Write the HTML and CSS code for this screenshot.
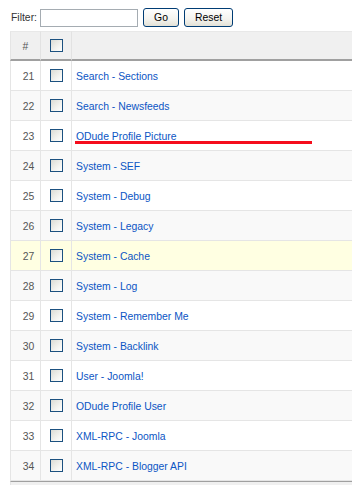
FILE: index.html
```html
<!DOCTYPE html>
<html lang="en">
<head>
    <meta charset="UTF-8">
    <title>Plugin Manager</title>
    <link rel="stylesheet" href="styles.css">
</head>
<body>

<form class="filter-bar">
    <label for="search">Filter:</label>
    <input type="text" id="search" class="filter-input">
    <button type="button" class="btn btn-go">Go</button>
    <button type="button" class="btn btn-reset">Reset</button>
</form>

<table class="adminlist">
    <thead>
        <tr>
            <th class="col-num">#</th>
            <th class="col-check"><span class="checkbox"></span></th>
            <th class="col-title"></th>
        </tr>
    </thead>
    <tbody>
        <tr class="row0"><td class="col-num">21</td><td class="col-check"><span class="checkbox"></span></td><td class="col-title"><a href="#">Search - Sections</a></td></tr>
        <tr class="row1"><td class="col-num">22</td><td class="col-check"><span class="checkbox"></span></td><td class="col-title"><a href="#">Search - Newsfeeds</a></td></tr>
        <tr class="row0"><td class="col-num">23</td><td class="col-check"><span class="checkbox"></span></td><td class="col-title marked"><a href="#">ODude Profile Picture</a><span class="red-line"></span></td></tr>
        <tr class="row1"><td class="col-num">24</td><td class="col-check"><span class="checkbox"></span></td><td class="col-title"><a href="#">System - SEF</a></td></tr>
        <tr class="row0"><td class="col-num">25</td><td class="col-check"><span class="checkbox"></span></td><td class="col-title"><a href="#">System - Debug</a></td></tr>
        <tr class="row1"><td class="col-num">26</td><td class="col-check"><span class="checkbox"></span></td><td class="col-title"><a href="#">System - Legacy</a></td></tr>
        <tr class="row0 hover"><td class="col-num">27</td><td class="col-check"><span class="checkbox"></span></td><td class="col-title"><a href="#">System - Cache</a></td></tr>
        <tr class="row1"><td class="col-num">28</td><td class="col-check"><span class="checkbox"></span></td><td class="col-title"><a href="#">System - Log</a></td></tr>
        <tr class="row0"><td class="col-num">29</td><td class="col-check"><span class="checkbox"></span></td><td class="col-title"><a href="#">System - Remember Me</a></td></tr>
        <tr class="row1"><td class="col-num">30</td><td class="col-check"><span class="checkbox"></span></td><td class="col-title"><a href="#">System - Backlink</a></td></tr>
        <tr class="row0"><td class="col-num">31</td><td class="col-check"><span class="checkbox"></span></td><td class="col-title"><a href="#">User - Joomla!</a></td></tr>
        <tr class="row1"><td class="col-num">32</td><td class="col-check"><span class="checkbox"></span></td><td class="col-title"><a href="#">ODude Profile User</a></td></tr>
        <tr class="row0"><td class="col-num">33</td><td class="col-check"><span class="checkbox"></span></td><td class="col-title"><a href="#">XML-RPC - Joomla</a></td></tr>
        <tr class="row1"><td class="col-num">34</td><td class="col-check"><span class="checkbox"></span></td><td class="col-title"><a href="#">XML-RPC - Blogger API</a></td></tr>
    </tbody>
    <tfoot>
        <tr><td colspan="3"></td></tr>
    </tfoot>
</table>

</body>
</html>
```

FILE: styles.css
```css
body {
    margin: 0;
    background: #fff;
    font-family: "Liberation Sans", Arial, Helvetica, sans-serif;
    font-size: 10.4px;
    color: #333;
}

/* filter bar */
.filter-bar {
    display: flex;
    align-items: center;
    height: 19px;
    padding: 8px 0 0 11px;
    margin: 0;
}

.filter-bar label {
    color: #333;
    margin-right: 3px;
}

.filter-input {
    box-sizing: border-box;
    width: 98px;
    height: 18px;
    margin: 0;
    padding: 0 2px;
    border: 1px solid #a5acb2;
    font: inherit;
}

.btn {
    box-sizing: border-box;
    height: 19px;
    margin: 0 0 0 5px;
    padding: 0;
    border: 1px solid #003c74;
    border-radius: 3px;
    background: linear-gradient(#ffffff, #f4f3ee 60%, #e3e1d6);
    font: inherit;
    color: #000;
}

.btn-go { width: 36px; }
.btn-reset { width: 49px; }

/* table */
.adminlist {
    width: calc(100% - 10px);
    margin: 4px 0 0 10px;
    border-collapse: separate;
    border-spacing: 0;
}

.adminlist th,
.adminlist td {
    box-sizing: border-box;
    padding: 1px 4px 0;
}

.adminlist th {
    height: 30px;
    background: #f0f0f0;
    border-top: 1px solid #e8e8e8;
    border-bottom: 2px solid #a0a0a0;
    border-right: 1px solid #e2e2e2;
    color: #666;
    font-weight: normal;
}

.adminlist td {
    height: 30px;
    border-bottom: 1px solid #e5e5e5;
    border-right: 1px solid #e5e5e5;
}

.adminlist .col-num {
    width: 31px;
    border-left: 1px solid #e5e5e5;
    text-align: center;
    padding-left: 6px;
    padding-right: 0;
    color: #555;
}

.adminlist th.col-num {
    padding-left: 0;
}

.adminlist .col-check {
    width: 31px;
    padding: 0;
    text-align: center;
}

.adminlist .col-title {
    border-right: none;
}

.row0 td { background: #fff; }
.row1 td { background: #f9f9f9; }
.row0.hover td { background: #ffffe2; }

.adminlist a {
    color: #0b55c4;
    text-decoration: none;
}

.checkbox {
    display: inline-block;
    box-sizing: border-box;
    width: 13px;
    height: 13px;
    vertical-align: middle;
    border: 1px solid #1c5180;
    background: linear-gradient(135deg, #dcdcd5, #f3f3ef 60%, #ffffff);
}

.marked {
    position: relative;
}

.red-line {
    position: absolute;
    left: 3px;
    top: 20px;
    width: 237px;
    height: 3px;
    background: #f50d1c;
}

.adminlist tfoot td {
    height: 5px;
    padding: 0;
    background: #f0f0f0;
    border-top: 1px solid #a0a0a0;
    border-bottom: none;
    border-right: none;
    border-left: 1px solid #e5e5e5;
}
```
